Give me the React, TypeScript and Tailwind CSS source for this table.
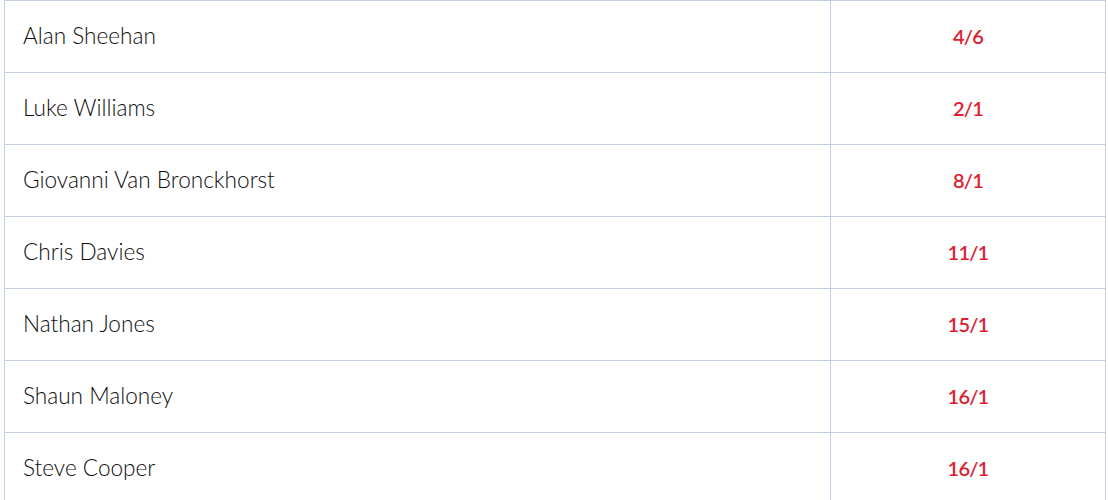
import React from "react";

const rows: [string, string][] = [
  ["Alan Sheehan", "4/6"],
  ["Luke Williams", "2/1"],
  ["Giovanni Van Bronckhorst", "8/1"],
  ["Chris Davies", "11/1"],
  ["Nathan Jones", "15/1"],
  ["Shaun Maloney", "16/1"],
  ["Steve Cooper", "16/1"],
];

export default function App() {
  return (
    <div className="w-[1109px] h-[500px] overflow-hidden bg-white" style={{ fontFamily: "Lato, 'Noto Sans', sans-serif" }}>
      <div className="ml-[4px] w-[1102px] border-l-[1.5px] border-r-[1.5px] border-[#c3cde3]">
        {rows.map(([name, odds], i) => (
          <div key={i} className="flex h-[72px] border-t-[1.5px] border-[#c3cde3]">
            <div className="w-[826px] flex items-center pl-[18px] pb-[2px] text-[22.6px] font-light text-[#0e0e0e] border-r-[1.5px] border-[#c3cde3]">
              {name}
            </div>
            <div className="flex-1 flex items-center justify-center pb-[2px] text-[20px] font-semibold text-[#dc1e32] tracking-[-0.8px]">
              {odds}
            </div>
          </div>
        ))}
      </div>
    </div>
  );
}
